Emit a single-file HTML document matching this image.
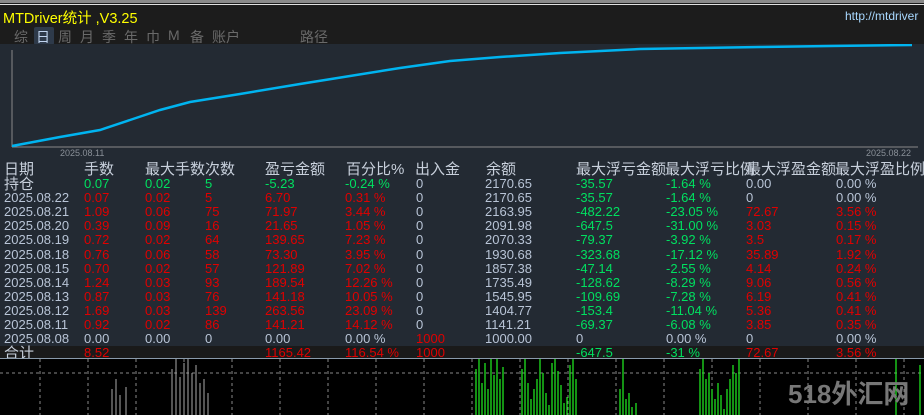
<!DOCTYPE html>
<html><head><meta charset="utf-8"><style>
*{margin:0;padding:0;box-sizing:border-box}
body{width:924px;height:415px;overflow:hidden;background:#1c1c1c;font-family:"Liberation Sans","Noto Sans CJK SC",sans-serif;position:relative}
.a{position:absolute;white-space:nowrap}
.t{font-size:13px;line-height:14px}
.w{color:#b8c4d6}.r{color:#e00000}.g{color:#00e060}
.h{font-size:15px;color:#c8d0dc;line-height:16px}
.m{position:absolute;top:27px;color:#6a6a6a;font-size:14px}
</style></head><body>
<div class="a" style="left:0;top:0;width:924px;height:3px;background:#8a8a8a"></div>
<div class="a" style="left:0;top:4px;width:924px;height:1px;background:#e0e0e0"></div>
<div class="a" style="left:3px;top:7px;color:#ffff00;font-size:14.5px">MTDriver统计 ,V3.25</div>
<div class="a" style="left:845px;top:9px;color:#a8d8ff;font-size:12px">http://mtdriver</div>
<div class="a" style="left:34px;top:27px;width:20px;height:18px;background:#2e3a4a;border-radius:2px"></div>
<span class="m" style="left:14px">综</span><span class="m" style="left:36px;color:#c0d4ee">日</span><span class="m" style="left:58px">周</span><span class="m" style="left:80px">月</span><span class="m" style="left:102px">季</span><span class="m" style="left:124px">年</span><span class="m" style="left:146px">巾</span><span class="m" style="left:168px">M</span><span class="m" style="left:190px">备</span><span class="m" style="left:212px">账户</span><span class="m" style="left:300px">路径</span>
<div class="a" style="left:0;top:44px;width:924px;height:314px;background:#232a33"></div>
<svg class="a" style="left:0;top:44px" width="924" height="120">
<line x1="12" y1="6" x2="12" y2="103" stroke="#888" stroke-width="1"/>
<line x1="12" y1="103" x2="918" y2="103" stroke="#888" stroke-width="1"/>
<polyline fill="none" stroke="#00b4f0" stroke-width="2.5" points="12,102 60,93 100,86 130,76 160,66 190,58 240,50 300,40 350,32 400,24 450,17 500,13 560,9 640,5 700,4 760,3 830,2 912,1"/>
<text x="60" y="112" fill="#8a9098" font-size="9" font-family="Liberation Sans">2025.08.11</text>
<text x="866" y="112" fill="#8a9098" font-size="9" font-family="Liberation Sans">2025.08.22</text>
</svg>
<div class="a h" style="left:4px;top:162px">日期</div>
<div class="a h" style="left:84px;top:162px">手数</div>
<div class="a h" style="left:145px;top:162px">最大手数次数</div>
<div class="a h" style="left:265px;top:162px">盈亏金额</div>
<div class="a h" style="left:346px;top:162px">百分比%</div>
<div class="a h" style="left:415px;top:162px">出入金</div>
<div class="a h" style="left:486px;top:162px">余额</div>
<div class="a h" style="left:576px;top:162px">最大浮亏金额</div>
<div class="a h" style="left:665px;top:162px">最大浮亏比例</div>
<div class="a h" style="left:746px;top:162px">最大浮盈金额</div>
<div class="a h" style="left:835px;top:162px">最大浮盈比例</div>
<div class="a" style="left:0;top:346px;width:924px;height:12px;background:#1a1a1a"></div>
<div id="rows"></div>
<div class="a" style="left:0;top:358px;width:924px;height:57px;background:#000;border-top:1px solid #8a9aaa"></div>
<svg class="a" style="left:0;top:359px" width="924" height="56">
<g stroke="#888" stroke-dasharray="3,3" stroke-width="1">
<line x1="0" y1="14" x2="924" y2="14"/>
<line x1="40" y1="0" x2="40" y2="56"/><line x1="88" y1="0" x2="88" y2="56"/><line x1="136" y1="0" x2="136" y2="56"/><line x1="184" y1="0" x2="184" y2="56"/><line x1="232" y1="0" x2="232" y2="56"/><line x1="280" y1="0" x2="280" y2="56"/><line x1="328" y1="0" x2="328" y2="56"/><line x1="376" y1="0" x2="376" y2="56"/><line x1="424" y1="0" x2="424" y2="56"/><line x1="472" y1="0" x2="472" y2="56"/><line x1="520" y1="0" x2="520" y2="56"/><line x1="568" y1="0" x2="568" y2="56"/><line x1="616" y1="0" x2="616" y2="56"/><line x1="664" y1="0" x2="664" y2="56"/><line x1="712" y1="0" x2="712" y2="56"/><line x1="760" y1="0" x2="760" y2="56"/><line x1="808" y1="0" x2="808" y2="56"/><line x1="856" y1="0" x2="856" y2="56"/><line x1="904" y1="0" x2="904" y2="56"/>
</g>
<g stroke="#aaa" stroke-width="1">
<path d="M112 56V30M116 56V20M120 56V36M126 56V28M172 56V10M176 56V0M180 56V18M184 56V4M188 56V0M192 56V14M196 56V6M200 56V24M204 56V20M208 56V34"/>
</g>
<g stroke="#20e020" stroke-width="1.3">
<path d="M476 56V10M479 56V0M482 56V24M485 56V4M488 56V30M491 56V0M494 56V16M497 56V0M500 56V20M503 56V8M522 56V10M525 56V0M528 56V24M531 56V40M534 56V30M537 56V20M540 56V0M543 56V14M546 56V34M549 56V46M552 56V4M555 56V0M558 56V12M561 56V26M564 56V44M567 56V38M570 56V6M573 56V0M576 56V20M620 56V30M623 56V0M626 56V40M629 56V34M632 56V48M636 56V44M700 56V10M703 56V0M706 56V20M709 56V14M712 56V30M715 56V40M718 56V24M721 56V36M724 56V50M727 56V30M730 56V20M733 56V6M736 56V14M739 56V0M896 56V0M920 56V6"/>
</g>
<text x="788" y="44" fill="#777" font-size="26" font-weight="bold" font-family="Liberation Sans,Noto Sans CJK SC,sans-serif">518外汇网</text>
</svg>
<script>
var d=[
["持仓","0.07","0.02","5","-5.23","-0.24 %","0","2170.65","-35.57","-1.64 %","0.00","0.00 %","gggggg","w","w"],
["2025.08.22","0.07","0.02","5","6.70","0.31 %","0","2170.65","-35.57","-1.64 %","0","0.00 %","rrrrr","w","w"],
["2025.08.21","1.09","0.06","75","71.97","3.44 %","0","2163.95","-482.22","-23.05 %","72.67","3.56 %","rrrrr","r","r"],
["2025.08.20","0.39","0.09","16","21.65","1.05 %","0","2091.98","-647.5","-31.00 %","3.03","0.15 %","rrrrr","r","r"],
["2025.08.19","0.72","0.02","64","139.65","7.23 %","0","2070.33","-79.37","-3.92 %","3.5","0.17 %","rrrrr","r","r"],
["2025.08.18","0.76","0.06","58","73.30","3.95 %","0","1930.68","-323.68","-17.12 %","35.89","1.92 %","rrrrr","r","r"],
["2025.08.15","0.70","0.02","57","121.89","7.02 %","0","1857.38","-47.14","-2.55 %","4.14","0.24 %","rrrrr","r","r"],
["2025.08.14","1.24","0.03","93","189.54","12.26 %","0","1735.49","-128.62","-8.29 %","9.06","0.56 %","rrrrr","r","r"],
["2025.08.13","0.87","0.03","76","141.18","10.05 %","0","1545.95","-109.69","-7.28 %","6.19","0.41 %","rrrrr","r","r"],
["2025.08.12","1.69","0.03","139","263.56","23.09 %","0","1404.77","-153.4","-11.04 %","5.36","0.41 %","rrrrr","r","r"],
["2025.08.11","0.92","0.02","86","141.21","14.12 %","0","1141.21","-69.37","-6.08 %","3.85","0.35 %","rrrrr","r","r"],
["2025.08.08","0.00","0.00","0","0.00","0.00 %","1000","1000.00","0","0.00 %","0","0.00 %","wwwww","w","w"],
["合计","8.52","","","1165.42","116.54 %","1000","","-647.5","-31 %","72.67","3.56 %","rrrrr","r","r"]];
var xs=[4,84,145,205,265,345,416,485,576,666,746,836],h="";
d.forEach(function(r,i){var y=177+i*14.1;
for(var j=0;j<12;j++){var c;
if(j==0)c=(i==0||i==12)?"h":"w";
else if(j<=5)c=r[12][j-1];
else if(j==6)c=(r[6]=="1000")?"r":"w";
else if(j==7)c="w";
else if(j<=9)c=(i==11)?"w":"g";
else c=r[13];
var st=(j==0&&(i==0||i==12))?"font-size:15px;color:#c8d0dc":"";
h+='<div class="a t '+c+'" style="left:'+xs[j]+'px;top:'+y.toFixed(1)+'px;'+st+'">'+r[j]+'</div>';}});
document.getElementById("rows").innerHTML=h;
</script>
</body></html>
